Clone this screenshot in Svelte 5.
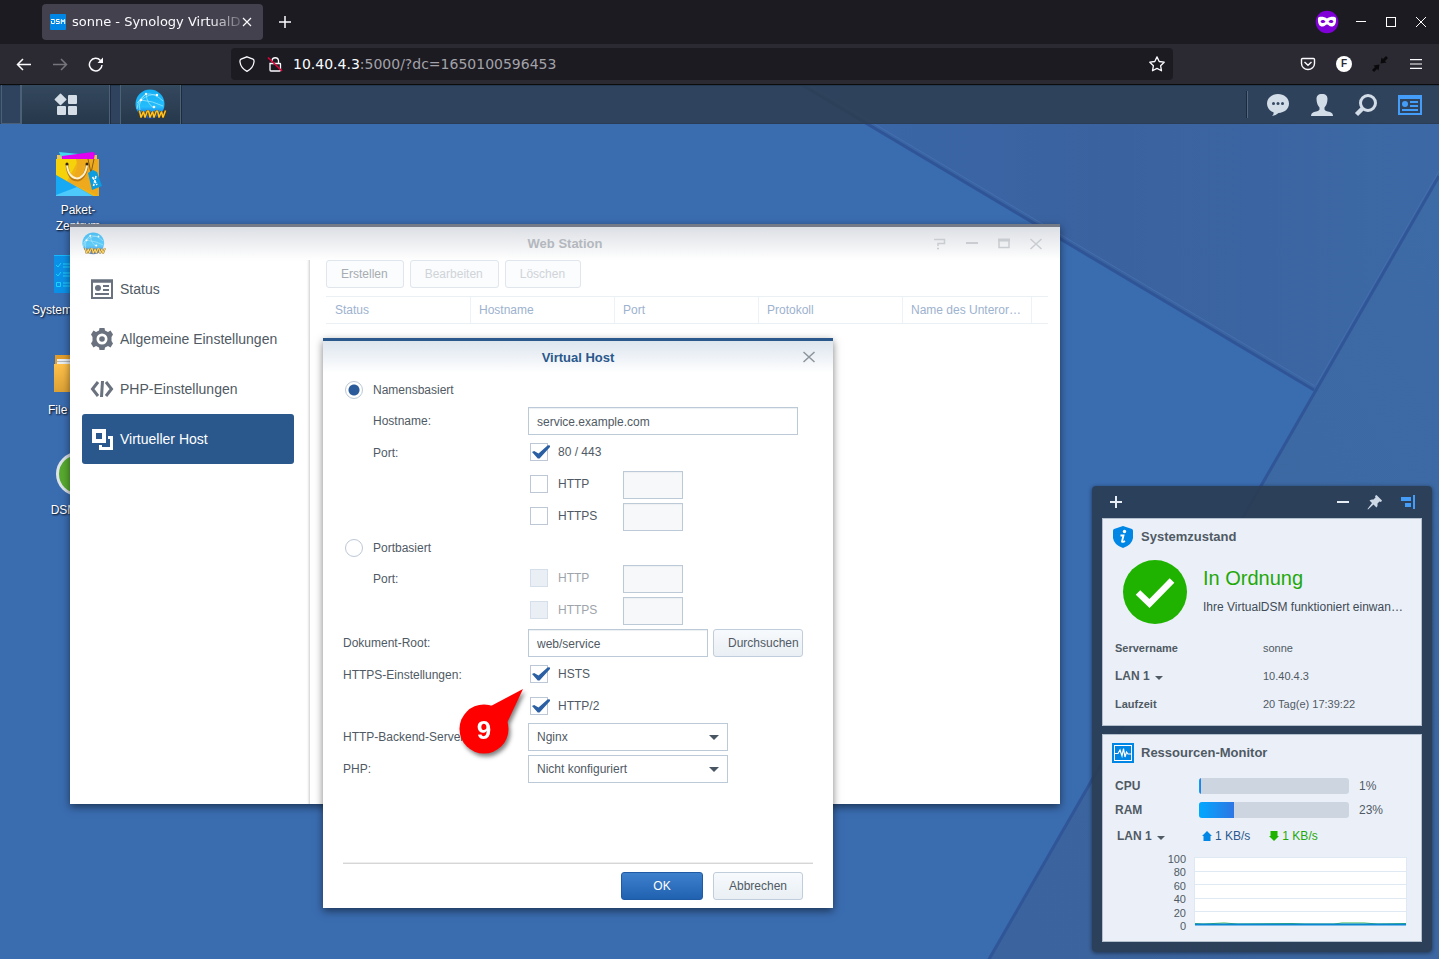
<!-- App.svelte – browser window with the DSM desktop and the Web Station virtual host dialog -->
<script lang="ts">
  const shortcuts = [
    { id: 'packages', name: 'Paket-Zentrum' },
    { id: 'control', name: 'Systemsteuerung' },
    { id: 'files', name: 'File Station' },
    { id: 'help', name: 'DSM-Hilfe' },
  ];

  const sections = [
    { id: 'status', name: 'Status' },
    { id: 'general', name: 'Allgemeine Einstellungen' },
    { id: 'php', name: 'PHP-Einstellungen' },
    { id: 'vhost', name: 'Virtueller Host' },
  ];
  let section = 'vhost';

  const columns = ['Status', 'Hostname', 'Port', 'Protokoll', 'Name des Unterordners'];

  let mode = 'name';
  let hostname = 'service.example.com';
  let defaultPorts = true;
  let customHttp = false;
  let customHttps = false;
  let root = 'web/service';
  let hsts = true;
  let http2 = true;
  let backend = 'Nginx';
  let php = 'Nicht konfiguriert';

  const usage = [
    { name: 'CPU', value: 1 },
    { name: 'RAM', value: 23 },
  ];
  const scale = [100, 80, 60, 40, 20, 0];
</script>

{#snippet globe()}
  <svg class="globe" viewBox="0 0 32 32" aria-hidden="true">
    <defs>
      <linearGradient id="globe-fill" x1="0" y1="0" x2="0" y2="1">
        <stop offset="0" stop-color="#12aef5" />
        <stop offset=".6" stop-color="#25bdfb" />
        <stop offset="1" stop-color="#0b4fd8" />
      </linearGradient>
    </defs>
    <circle cx="15" cy="15" r="14.500" fill="url(#globe-fill)" />
    <g fill="none" stroke="#a5e9ff" stroke-width=".7">
      <path d="M11 5 Q20 4 28 12 M11 5 Q3 10 2 20 M11 5 Q12 15 19 19 M6 11 Q15 4 22 6 M6 11 Q18 12 28 17 M6 11 Q3 17 5 21 M2 14 L11 5" />
    </g>
    <g fill="#fff"><circle cx="11" cy="5" r="1.200" /><circle cx="6" cy="11" r="1.300" /><circle cx="22" cy="6" r="1.200" /><circle cx="19" cy="18" r="1.300" /></g>
    <g fill="none" stroke-linejoin="bevel">
      <path d="M4.500 21.500 L6 28.500 L8.500 22.500 L10 28.500 L12.500 21.500 M13.500 21.500 L15 28.500 L17.500 22.500 L19 28.500 L21.500 21.500 M22.500 21.500 L24 28.500 L26.500 22.500 L28 28.500 L30.500 21.500" stroke="#5b3b05" stroke-width="2.600" />
      <path d="M4.500 21.500 L6 28.500 L8.500 22.500 L10 28.500 L12.500 21.500 M13.500 21.500 L15 28.500 L17.500 22.500 L19 28.500 L21.500 21.500 M22.500 21.500 L24 28.500 L26.500 22.500 L28 28.500 L30.500 21.500" stroke="#ffc526" stroke-width="1.500" />
    </g>
  </svg>
{/snippet}

{#snippet cross()}
  <svg width="12" height="12" viewBox="0 0 12 12" fill="none" stroke="currentColor" stroke-width="1.500" aria-hidden="true"><path d="M.5 1 L11.500 11 M11.500 1 L.5 11" /></svg>
{/snippet}

<div class="browser">
  <header class="tabs">
    <div class="tab">
      <span class="favicon">
        <svg width="16" height="16" viewBox="0 0 16 16" fill="none" stroke="#fff" stroke-width="1" aria-hidden="true">
          <path d="M1 5.500 H4 Q4.700 5.500 4.700 6.200 V8.800 Q4.700 9.500 4 9.500 H1.500 V7 M9.500 5.500 H6.500 V7.500 H9.300 V9.500 H6 M11.300 10 V5.500 H11.700 L13 8 L14.300 5.500 H14.700 V10" />
        </svg>
      </span>
      <span class="tab-title">sonne - Synology VirtualDSM</span>
      <button class="plain" aria-label="Close tab">
        <svg width="10" height="10" viewBox="0 0 10 10" stroke="#fbfbfe" stroke-width="1.200" aria-hidden="true"><path d="M1 1 L9 9 M9 1 L1 9" /></svg>
      </button>
    </div>
    <button class="plain new-tab" aria-label="New tab">
      <svg width="12" height="12" viewBox="0 0 12 12" stroke="#fbfbfe" stroke-width="1.500" aria-hidden="true"><path d="M6 0 V12 M0 6 H12" /></svg>
    </button>
    <div class="window-controls">
      <svg class="mask" width="24" height="24" viewBox="0 0 24 24" aria-hidden="true">
        <circle cx="12" cy="12" r="11.300" fill="#8000d7" />
        <path d="M12 8.500 C14 6.800 20 6 21 8 C21.500 14 19.500 16.500 16.500 16.500 C14 16.500 13.500 14.500 12 14.500 C10.500 14.500 10 16.500 7.500 16.500 C4.500 16.500 2.500 14 3 8 C4 6 10 6.800 12 8.500 Z" fill="#fff" />
        <path d="M5.500 11.500 C7 9.300 9.500 9.700 10.500 11.800 C9 13.500 6.500 13.500 5.500 11.500 Z M18.500 11.500 C17 9.300 14.500 9.700 13.500 11.800 C15 13.500 17.500 13.500 18.500 11.500 Z" fill="#8000d7" />
      </svg>
      <button class="plain" aria-label="Minimize"><svg width="10" height="10" viewBox="0 0 10 10" stroke="#fff" aria-hidden="true"><path d="M0 4.500 H10" /></svg></button>
      <button class="plain" aria-label="Maximize"><svg width="10" height="10" viewBox="0 0 10 10" fill="none" stroke="#fff" aria-hidden="true"><rect x=".5" y=".5" width="9" height="9" /></svg></button>
      <button class="plain" aria-label="Close"><svg width="10" height="10" viewBox="0 0 10 10" stroke="#fff" aria-hidden="true"><path d="M0 0 L10 10 M10 0 L0 10" /></svg></button>
    </div>
  </header>

  <nav class="toolbar">
    <div class="history">
      <button class="plain" aria-label="Back"><svg width="16" height="16" viewBox="0 0 16 16" fill="none" stroke="#fbfbfe" stroke-width="1.500" aria-hidden="true"><path d="M15 8.500 H1.500 M7 3 L1.500 8.500 L7 14" /></svg></button>
      <button class="plain" aria-label="Forward"><svg width="16" height="16" viewBox="0 0 16 16" fill="none" stroke="#76757c" stroke-width="1.500" aria-hidden="true"><path d="M1 8.500 H14.500 M9 3 L14.500 8.500 L9 14" /></svg></button>
      <button class="plain" aria-label="Reload"><svg width="16" height="16" viewBox="0 0 16 16" aria-hidden="true"><path d="M14 9 A6.300 6.300 0 1 1 12.500 4.500" fill="none" stroke="#fbfbfe" stroke-width="1.500" /><path d="M15 1.500 V7 H9.500 Z" fill="#fbfbfe" /></svg></button>
    </div>
    <div class="address">
      <svg width="16" height="16" viewBox="0 0 16 16" fill="none" stroke="#fbfbfe" stroke-width="1.300" aria-hidden="true"><path d="M8 .8 L14 3.200 Q15.300 3.800 15 6 Q14.300 12 8 15.300 Q1.700 12 1 6 Q.7 3.800 2 3.200 Z" /></svg>
      <svg width="16" height="16" viewBox="0 0 16 16" fill="none" stroke="#fbfbfe" stroke-width="1.300" aria-hidden="true"><path d="M5 6 V4.500 A3.300 3.300 0 0 1 11.500 4.500 V7 M3 7.500 H13 Q13.500 7.500 13.500 8 V14 Q13.500 15 12.500 15 H4 Q3 15 3 14 Z" /><path d="M1 1.500 L15 15" stroke="#e3003a" stroke-width="1.600" /></svg>
      <span class="url"><b>10.40.4.3</b>:5000/?dc=1650100596453</span>
      <svg width="16" height="16" viewBox="0 0 16 16" fill="none" stroke="#fbfbfe" stroke-width="1.300" stroke-linejoin="round" aria-hidden="true"><path d="M8 .9 L10.200 5.500 L15.200 6.200 L11.600 9.700 L12.500 14.800 L8 12.400 L3.500 14.800 L4.400 9.700 L.8 6.200 L5.800 5.500 Z" /></svg>
    </div>
    <div class="extensions">
      <svg width="16" height="16" viewBox="0 0 16 16" fill="none" stroke="#fbfbfe" stroke-width="1.400" aria-hidden="true"><path d="M2.500 2.500 H13.500 Q14.500 2.500 14.500 3.500 V7.500 A6.500 6 0 0 1 1.500 7.500 V3.500 Q1.500 2.500 2.500 2.500 Z M4.500 6 L8 9.300 L11.500 6" /></svg>
      <span class="badge-f">F</span>
      <svg width="16" height="16" viewBox="0 0 16 16" fill="#0a0a0c" aria-hidden="true"><path d="M14 0 L16 2 L13 5 L14.500 6.500 L8.500 7.500 L9.500 1.500 L11 3 Z M2 16 L0 14 L3 11 L1.500 9.500 L7.500 8.500 L6.500 14.500 L5 13 Z" /></svg>
      <button class="plain menu" aria-label="Menu"><svg width="12" height="10" viewBox="0 0 12 10" stroke="#fbfbfe" stroke-width="1.200" aria-hidden="true"><path d="M0 .6 H12 M0 5 H12 M0 9.400 H12" /></svg></button>
    </div>
  </nav>

  <main class="desktop">
    <svg class="wallpaper" viewBox="0 0 1439 874" preserveAspectRatio="xMaxYMin slice" aria-hidden="true">
      <defs>
        <linearGradient id="wall-top" x1="0" y1="0" x2="1" y2="0">
          <stop offset="0" stop-color="#3a67a9" />
          <stop offset=".5" stop-color="#3a629f" />
          <stop offset="1" stop-color="#3c69a5" />
        </linearGradient>
        <linearGradient id="wall-side" x1="0" y1="1" x2="1" y2="0">
          <stop offset="0" stop-color="#3b639d" />
          <stop offset="1" stop-color="#3d6ba6" />
        </linearGradient>
      </defs>
      <rect width="1439" height="874" fill="#3a6cb0" />
      <path d="M792 -6 H1439 V89 L1315 304 Z" fill="url(#wall-top)" />
      <path d="M1439 89 L988 874 H1439 Z" fill="url(#wall-side)" />
      <path d="M797 -3 L1314 305" stroke="#2f5597" stroke-width="3" />
      <path d="M799 -6 L1315 301" stroke="#456faf" />
      <path d="M1439 91 L988 876" stroke="#305697" stroke-width="3" />
      <path d="M1439 86 L1316 300" stroke="#456faf" />
    </svg>

    <div class="taskbar">
      <span class="show-desktop"></span>
      <button class="task menu-task" aria-label="Hauptmenü">
        <svg width="24" height="24" viewBox="0 0 24 24" fill="#d5dde6" aria-hidden="true">
          <path d="M7 .7 L12.300 6 Q12.800 6.500 12.300 7 L7 12 Q6.500 12.500 6 12 L.8 7 Q.3 6.500 .8 6 L6 .7 Q6.500 .3 7 .7 Z" />
          <rect x="14" y="2" width="9" height="9" rx="1" /><rect x="3" y="13" width="9" height="9" rx="1" /><rect x="14" y="13" width="9" height="9" rx="1" />
        </svg>
      </button>
      <button class="task app-task" aria-label="Web Station">{@render globe()}</button>
      <div class="tray">
        <button class="plain" aria-label="Benachrichtigungen"><svg width="24" height="24" viewBox="0 0 24 24" aria-hidden="true"><path d="M12 1 C18 1 23 5 23 10.500 C23 16 18.500 19.500 12.500 20 Q10 22.500 6 23 Q8 21.500 7.500 19.300 C3.500 18 1 14.500 1 10.500 C1 5 6 1 12 1 Z" fill="#d3dde8" /><circle cx="7.500" cy="10.500" r="1.500" fill="#344862" /><circle cx="12" cy="10.500" r="1.500" fill="#344862" /><circle cx="16.500" cy="10.500" r="1.500" fill="#344862" /></svg></button>
        <button class="plain" aria-label="Optionen"><svg width="24" height="24" viewBox="0 0 24 24" fill="#d3dde8" aria-hidden="true"><path d="M12 1 C16 1 17.500 3 17.500 6 C17.500 10 16 13 14.500 14.500 V16.500 Q15 18 20 19 Q23 20 23 23 H1 Q1 20 4 19 Q9 18 9.500 16.500 V14.500 C8 13 6.500 10 6.500 6 C6.500 3 8 1 12 1 Z" /></svg></button>
        <button class="plain" aria-label="Suche"><svg width="24" height="24" viewBox="0 0 24 24" fill="none" stroke="#d3dde8" aria-hidden="true"><circle cx="14" cy="10" r="7.500" stroke-width="3" /><path d="M8.500 15.500 L2.500 21.500" stroke-width="4.500" /></svg></button>
        <button class="plain" aria-label="Widgets"><svg width="24" height="20" viewBox="0 0 24 20" aria-hidden="true"><path d="M0 0 H24 V20 H0 Z M2 4 V18 H22 V4 Z" fill="#459dfa" fill-rule="evenodd" /><path d="M12 7 H20 M12 11 H20 M4 15 H20" stroke="#459dfa" stroke-width="2" /><circle cx="7" cy="9" r="3" fill="#459dfa" /></svg></button>
      </div>
    </div>

    <div class="shortcuts">
      {#each shortcuts as item (item.id)}
        <a class="shortcut" href="#{item.id}">
          {#if item.id === 'packages'}
            <svg width="48" height="48" viewBox="0 0 48 48" aria-hidden="true">
              <path d="M3 5 H43 V12 H3 Z" fill="#f3c34c" /><path d="M5 2 L25 4 L20 9 H8 Z" fill="#42d9ef" /><path d="M8 6 L39 2 L41 3 L40 9 H8 Z" fill="#e100f0" />
              <path d="M2 9 H45 V46 H2 Z" fill="#f0b514" /><path d="M2 9 H25 L13 31 L2 25 Z" fill="#f5d20a" /><path d="M22 9 H45 V46 L14 32 Q26 22 22 9 Z" fill="#efa91c" />
              <path d="M2 25 L39 46 H2 Z" fill="#18a9f4" /><path d="M2 46 V45 L23 37 L39 46 Z" fill="#4dc9fc" />
              <path d="M13 14 C14 35 31 35 33 15" fill="none" stroke="#b97912" stroke-width="3" /><path d="M13 14 C14 33 31 33 33 15" fill="none" stroke="#fff2ce" stroke-width="2" />
              <circle cx="13" cy="14" r="1.500" fill="#30240d" /><circle cx="33" cy="14" r="1.500" fill="#30240d" /><path d="M34 9 L37 23 L40 9" fill="none" stroke="#825b19" />
              <path d="M34 23 L39 20 L43 22 L48 36 L38 40 Z" fill="#0c9ce0" /><path d="M38.500 27 L43 35 M42 26 L39.500 36" stroke="#fff" stroke-width="1.600" stroke-dasharray="3 1" />
            </svg>
          {:else if item.id === 'control'}
            <svg width="48" height="48" viewBox="0 0 48 48" aria-hidden="true"><rect y="5" width="46" height="38" fill="#0a91e7" /><path d="M0 5.500 H46" stroke="#18b9ff" /><path d="M2 15 L4 17 L7 13 M9 14 H42 M9 17 H42 M2 24 L4 26 L7 22 M9 23 H42 M9 26 H42 M2.500 32.500 H6.500 V36.500 H2.500 Z M9 33 H42 M9 36 H42" fill="none" stroke="#1ed0ff" /></svg>
          {:else if item.id === 'files'}
            <svg width="48" height="48" viewBox="0 0 48 48" aria-hidden="true"><path d="M1 5 H18 L21 8 H45 V41 H1 Z" fill="#e29c29" /><path d="M3 9 H43 V15 H3 Z" fill="#e9edf0" /><path d="M3 11.500 H43" stroke="#aeb8be" /><path d="M0 14 H47 V42 H0 Z" fill="url(#folder-front)" /><defs><linearGradient id="folder-front" x1="0" y1="0" x2="0" y2="1"><stop stop-color="#ffc14a" /><stop offset="1" stop-color="#dba034" /></linearGradient></defs></svg>
          {:else}
            <svg width="48" height="48" viewBox="0 0 48 48" aria-hidden="true"><circle cx="24" cy="24" r="20.500" fill="#57a92f" stroke="#dce3e9" stroke-width="3" /><path d="M18 18 Q19 12 25 13 Q31 15 29 21 L24 26 V30" fill="none" stroke="#fff" stroke-width="4" /><circle cx="24" cy="35" r="2.500" fill="#fff" /></svg>
          {/if}
          <span>{item.name}</span>
        </a>
      {/each}
    </div>

    <section class="window web-station" aria-label="Web Station">
      <header class="title-bar">
        {@render globe()}
        <h2>Web Station</h2>
        <div class="title-tools">
          <button class="plain" aria-label="Hilfe"><svg width="12" height="12" viewBox="0 0 12 12" fill="none" stroke="currentColor" stroke-width="1.500" aria-hidden="true"><path d="M0 1.500 H10.500 V5.500 H4 V8 M3 10.500 H5" /></svg></button>
          <button class="plain" aria-label="Minimieren"><svg width="12" height="12" viewBox="0 0 12 12" stroke="currentColor" stroke-width="2" aria-hidden="true"><path d="M0 5 H12" /></svg></button>
          <button class="plain" aria-label="Maximieren"><svg width="12" height="12" viewBox="0 0 12 12" fill="none" stroke="currentColor" aria-hidden="true"><path d="M1 2 V9.500 H11 V2" stroke-width="1.500" /><path d="M0 2 H12" stroke-width="3" /></svg></button>
          <button class="plain" aria-label="Schließen">{@render cross()}</button>
        </div>
      </header>
      <div class="station-body">
        <nav class="sidebar">
          {#each sections as item (item.id)}
            <button class="section" class:active={section === item.id} on:click={() => (section = item.id)}>
              <svg width="24" height="24" viewBox="0 0 24 24" fill="none" stroke="currentColor" aria-hidden="true">
                {#if item.id === 'status'}
                  <path d="M2 3 V21 H22 V3" stroke-width="2" /><path d="M1 4 H23" stroke-width="3.500" /><path d="M13 9 H19 M13 13 H19 M5 17 H19" stroke-width="2" /><circle cx="8" cy="11" r="3" fill="currentColor" stroke="none" />
                {:else if item.id === 'general'}
                  <path d="M9.500 1 H14.500 L15 3.500 L18 5 L20.500 3.500 L23 7.500 L21.500 10 V14 L23 16.500 L20.500 20.500 L18 19 L15 20.500 L14.500 23 H9.500 L9 20.500 L6 19 L3.500 20.500 L1 16.500 L2.500 14 V10 L1 7.500 L3.500 3.500 L6 5 L9 3.500 Z M12 6.500 A5.500 5.500 0 1 0 12 17.500 A5.500 5.500 0 1 0 12 6.500 Z" fill="currentColor" fill-rule="evenodd" stroke="none" /><circle cx="12" cy="12" r="2.800" fill="currentColor" stroke="none" />
                {:else if item.id === 'php'}
                  <path d="M8 5 L2.500 12 L8 19 M16 5 L21.500 12 L16 19" stroke-width="3" /><path d="M12.500 4 L11.500 20" stroke-width="3" />
                {:else}
                  <rect x="4" y="4" width="10" height="10" stroke-width="4" /><path d="M18 10.500 H21.500 V21.500 H10.500 V18" stroke-width="3" />
                {/if}
              </svg>
              <span>{item.name}</span>
            </button>
          {/each}
        </nav>
        <div class="hosts">
          <div class="actions">
            <button class="btn ghost">Erstellen</button>
            <button class="btn ghost" disabled>Bearbeiten</button>
            <button class="btn ghost" disabled>Löschen</button>
          </div>
          <table class="host-table">
            <thead>
              <tr>
                {#each columns as col}
                  <th scope="col">{col}</th>
                {/each}
                <td></td>
              </tr>
            </thead>
          </table>
        </div>
      </div>
    </section>

    <section class="window dialog" role="dialog" aria-label="Virtual Host">
      <header class="title-bar">
        <h2>Virtual Host</h2>
        <div class="title-tools">
          <button class="plain" aria-label="Dialog schließen">{@render cross()}</button>
        </div>
      </header>
      <form on:submit|preventDefault>
        <div class="row short">
          <label class="choice"><input type="radio" value="name" bind:group={mode} /> Namensbasiert</label>
        </div>
        <div class="row">
          <label class="name indent" for="hostname">Hostname:</label>
          <input id="hostname" class="text" type="text" bind:value={hostname} />
        </div>
        <div class="row">
          <span class="name indent">Port:</span>
          <label class="check"><input type="checkbox" bind:checked={defaultPorts} /> 80 / 443</label>
        </div>
        <div class="row">
          <span class="name"></span>
          <label class="check"><input type="checkbox" bind:checked={customHttp} /> HTTP</label>
          <input class="text port" type="text" aria-label="HTTP-Port" disabled={!customHttp} />
        </div>
        <div class="row">
          <span class="name"></span>
          <label class="check"><input type="checkbox" bind:checked={customHttps} /> HTTPS</label>
          <input class="text port" type="text" aria-label="HTTPS-Port" disabled={!customHttps} />
        </div>
        <div class="row short">
          <label class="choice"><input type="radio" value="port" bind:group={mode} /> Portbasiert</label>
        </div>
        <div class="row">
          <span class="name indent">Port:</span>
          <label class="check off"><input type="checkbox" disabled /> HTTP</label>
          <input class="text port" type="text" aria-label="HTTP-Port (portbasiert)" disabled />
        </div>
        <div class="row">
          <span class="name"></span>
          <label class="check off"><input type="checkbox" disabled /> HTTPS</label>
          <input class="text port" type="text" aria-label="HTTPS-Port (portbasiert)" disabled />
        </div>
        <div class="row">
          <label class="name" for="root">Dokument-Root:</label>
          <input id="root" class="text root" type="text" bind:value={root} />
          <button type="button" class="btn browse">Durchsuchen</button>
        </div>
        <div class="row">
          <span class="name">HTTPS-Einstellungen:</span>
          <label class="check"><input type="checkbox" bind:checked={hsts} /> HSTS</label>
        </div>
        <div class="row short">
          <span class="name"></span>
          <label class="check"><input type="checkbox" bind:checked={http2} /> HTTP/2</label>
        </div>
        <div class="row">
          <label class="name" for="backend">HTTP-Backend-Server:</label>
          <select id="backend" bind:value={backend}>
            <option>Nginx</option>
            <option>Apache 2.4</option>
          </select>
        </div>
        <div class="row">
          <label class="name" for="php">PHP:</label>
          <select id="php" bind:value={php}>
            <option>Nicht konfiguriert</option>
            <option>PHP 7.4</option>
          </select>
        </div>
      </form>
      <footer>
        <button class="btn primary">OK</button>
        <button class="btn cancel">Abbrechen</button>
      </footer>
      <div class="callout">
        <svg width="80" height="80" viewBox="0 0 80 80" fill="#fe0000" aria-hidden="true"><circle cx="29" cy="46" r="24.500" /><path d="M34 24 L68 6 L52 40 Z" /></svg>
        <span>9</span>
      </div>
    </section>

    <aside class="widgets">
      <header>
        <button class="plain add" aria-label="Widget hinzufügen"><svg width="12" height="12" viewBox="0 0 12 12" stroke="#e6edf5" stroke-width="2" aria-hidden="true"><path d="M6 0 V12 M0 6 H12" /></svg></button>
        <button class="plain" aria-label="Widgets minimieren"><svg width="12" height="12" viewBox="0 0 12 12" stroke="#e6edf5" stroke-width="2" aria-hidden="true"><path d="M0 6 H12" /></svg></button>
        <button class="plain" aria-label="Anheften"><svg width="16" height="16" viewBox="0 0 16 16" fill="#cfd9e5" aria-hidden="true"><path d="M9.500 1 L15 6.500 L14 8 L12.500 7.500 L10.500 9.500 Q11 12 9.500 13.500 L6.500 10.500 L1 15.500 L.5 15 L5 9 L2.500 6.500 Q4.500 5 6.500 5.500 L8.500 3.500 L8 2 Z" /></svg></button>
        <button class="plain" aria-label="Andocken"><svg width="14" height="14" viewBox="0 0 14 14" fill="#459dfa" aria-hidden="true"><rect y="2" width="10" height="4" /><rect x="4" y="8" width="6" height="4" /><rect x="12" width="2" height="14" /></svg></button>
      </header>

      <section class="card">
        <h3>
          <svg width="22" height="22" viewBox="0 0 22 22" aria-hidden="true"><path d="M11 0 L20 3 Q21 3.500 21 5 V12 Q20 19 11 22 Q2 19 1 12 V5 Q1 3.500 2 3 Z" fill="#0086e5" /><circle cx="12.500" cy="5.500" r="1.700" fill="#fff" /><path d="M8.500 9.500 H11.500 L10 15.500 Q10.500 16.500 13 15" fill="none" stroke="#fff" stroke-width="1.800" /></svg>
          Systemzustand
        </h3>
        <div class="health">
          <svg width="64" height="64" viewBox="0 0 64 64" aria-hidden="true"><circle cx="32" cy="32" r="32" fill="#1fb300" /><path d="M15 32.500 L26.500 43.500 L49 20.500" fill="none" stroke="#fff" stroke-width="6.500" /></svg>
          <div class="health-text">
            <strong>In Ordnung</strong>
            <p>Ihre VirtualDSM funktioniert einwandfrei.</p>
          </div>
        </div>
        <table class="facts">
          <tbody>
            <tr><th scope="row">Servername</th><td>sonne</td></tr>
            <tr><th scope="row"><button class="plain lan">LAN 1 <i class="caret"></i></button></th><td>10.40.4.3</td></tr>
            <tr><th scope="row">Laufzeit</th><td>20 Tag(e) 17:39:22</td></tr>
          </tbody>
        </table>
      </section>

      <section class="card">
        <h3>
          <svg width="22" height="20" viewBox="0 0 22 20" fill="none" stroke="#fff" aria-hidden="true"><rect width="22" height="20" fill="#0086e5" stroke="none" /><rect x="2.500" y="2.500" width="17" height="15" /><path d="M3 10.500 H6 L8 7 L10 13 L11.500 5.500 L13 14 L14.500 9 L16 11 H19" stroke-width="1.200" /></svg>
          Ressourcen-Monitor
        </h3>
        <div class="usages">
          {#each usage as item (item.name)}
            <div class="usage">
              <b>{item.name}</b>
              <span class="bar"><span class="fill" style="width: {item.value}%"></span></span>
              <span>{item.value}%</span>
            </div>
          {/each}
        </div>
        <div class="traffic">
          <button class="plain lan">LAN 1 <i class="caret"></i></button>
          <span class="up"><svg width="10" height="10" viewBox="0 0 10 10" fill="#0086e5" aria-hidden="true"><path d="M5 0 L10 5 H8.500 V10 H1.500 V5 H0 Z" /></svg>1 KB/s</span>
          <span class="down"><svg width="10" height="10" viewBox="0 0 10 10" fill="#1fb300" aria-hidden="true"><path d="M5 10 L10 5 H8.500 V0 H1.500 V5 H0 Z" /></svg>1 KB/s</span>
        </div>
        <div class="chart">
          <div class="scale">
            {#each scale as tick}<span>{tick}</span>{/each}
          </div>
          <svg viewBox="0 0 213 69" preserveAspectRatio="none" aria-hidden="true">
            <rect x=".5" y=".5" width="212" height="67" fill="#fff" stroke="#dfe9f3" />
            <path d="M0 14.500 H213 M0 27.500 H213 M0 41.500 H213 M0 54.500 H213" stroke="#dfe9f3" />
            <path d="M1 66.500 L9 67 L30 66 L44 67 L98 66.500 L110 67 L140 67 L148 66 L170 66 L184 67 L212 66.500" fill="none" stroke="#39b44a" />
            <path d="M1 67.500 H212" stroke="#0b86d4" stroke-width="2" />
          </svg>
        </div>
      </section>
    </aside>
  </main>
</div>

<style>
  :global(body) { margin: 0; font-family: "Liberation Sans", Arial, sans-serif; }
  .browser { min-height: 100vh; display: flex; flex-direction: column; color: #505a64; font-size: 12px; line-height: 16px; background: #1c1b22; }
  button, input, select { font: inherit; color: inherit; box-sizing: border-box; margin: 0; }
  svg { display: block; flex: none; }
  h2, h3, p { margin: 0; }
  .plain { display: flex; align-items: center; justify-content: center; padding: 0; border: none; background: none; cursor: pointer; }

  /* browser chrome */
  .tabs { height: 44px; display: flex; align-items: center; padding: 0 13px 0 42px; }
  .tab { width: 221px; height: 36px; box-sizing: border-box; display: flex; align-items: center; gap: 6px; padding: 0 11px 0 8px; border-radius: 4px; background: #42414d; color: #fbfbfe; font: 13px/20px "DejaVu Sans", sans-serif; }
  .favicon { background: #0086e5; border-radius: 1px; }
  .tab-title { flex: 1; margin-right: -4px; overflow: hidden; white-space: nowrap; mask-image: linear-gradient(to right, #000 82%, transparent 105%); }
  .new-tab { margin-left: 16px; }
  .window-controls { display: flex; align-items: center; gap: 20px; margin-left: auto; }
  .mask { margin-right: -3px; }
  .toolbar { height: 40px; display: flex; align-items: center; padding: 0 16px; background: #2b2a33; border-bottom: 1px solid #0c0c0d; }
  .history { display: flex; gap: 20px; width: 215px; }
  .address { flex: 1; height: 32px; display: flex; align-items: center; gap: 12px; padding: 0 8px; border-radius: 4px; background: #1c1b22; }
  .url { flex: 1; color: #a3a2a9; font: 14px/20px "DejaVu Sans", sans-serif; margin-left: -2px; }
  .url b { color: #fbfbfe; font-weight: normal; }
  .extensions { display: flex; align-items: center; justify-content: flex-end; gap: 20px; width: 249px; padding-right: 1px; }
  .menu { margin-left: 2px; }
  .badge-f { width: 16px; height: 16px; border-radius: 50%; background: #fff; color: #2b2a33; font-size: 10px; font-weight: bold; text-align: center; }

  /* desktop */
  .desktop { flex: 1; position: relative; overflow: hidden; background: #3a6cb0; }
  .wallpaper { position: absolute; inset: 0; width: 100%; height: 100%; }
  .taskbar { position: relative; height: 39px; display: flex; background: rgba(45, 62, 82, 0.88); box-shadow: inset 0 1px #24384f, inset 0 -1px #2a3d54; }
  .show-desktop { width: 18px; margin-left: 1px; border: 1px solid #4a6078; border-top: none; }
  .task { display: flex; align-items: center; justify-content: center; padding: 0; border: solid #4d6174; border-width: 0 1px; background: linear-gradient(#34485e, #26384b); box-shadow: 1px 0 #1d2d3f; cursor: pointer; }
  .menu-task { width: 89px; }
  .app-task { width: 61px; margin-left: 10px; }
  .globe { width: 32px; height: 32px; }
  .tray { display: flex; align-items: center; gap: 20px; margin: 6px 17px 6px auto; padding-left: 19px; border-left: 1px solid #1c2b3b; box-shadow: inset 1px 0 #526880; }
  .shortcuts { position: relative; width: 94px; padding: 26px 0 0 31px; }
  .shortcut { display: flex; flex-direction: column; align-items: center; gap: 4px; height: 100px; color: #fff; text-align: center; text-decoration: none; text-shadow: 1px 1px 2px #000; }
  .shortcut span { width: 92px; }
  .shortcut:first-child span { width: 60px; }

  /* windows */
  .window { position: absolute; display: flex; flex-direction: column; background: #fff; box-shadow: 0 3px 8px rgba(0, 0, 0, 0.5); }
  .web-station { left: 70px; top: 139px; width: 990px; height: 580px; box-sizing: border-box; border-top: 3px solid #747b86; }
  .title-bar { position: relative; height: 32px; flex: none; display: flex; align-items: center; justify-content: center; background: linear-gradient(#dde5ee, #fff); }
  .title-bar h2 { font-size: 13px; line-height: 15px; color: #2a588c; }
  .title-tools { position: absolute; right: 18px; display: flex; gap: 20px; color: #8c949c; }
  .web-station .title-bar { height: 33px; background: linear-gradient(#dcdfe4, #fff); }
  .web-station h2 { color: #b4b8be; }
  .web-station .title-tools { color: #c9ccd0; }
  .web-station .globe { position: absolute; left: 12px; width: 24px; height: 24px; opacity: 0.7; }
  .station-body { flex: 1; display: flex; }
  .sidebar { width: 212px; padding: 4px 15px 0 12px; border-right: 1px solid #dcdcdc; box-shadow: inset -2px 0 2px -1px #e6e6e6; }
  .section { width: 100%; height: 50px; display: flex; align-items: center; gap: 6px; padding: 0 8px; border: none; border-radius: 3px; background: none; color: #69727e; font-size: 14px; text-align: left; white-space: nowrap; cursor: pointer; }
  .section span { color: #505a64; }
  .section.active, .section.active span { color: #fff; }
  .section.active { background: #2a588c; }
  .hosts { flex: 1; padding: 0 12px 0 16px; }
  .actions { display: flex; gap: 6px; margin-bottom: 8px; }
  .btn { height: 28px; padding: 0 14px; border: 1px solid #c0cddb; border-radius: 3px; background: linear-gradient(#f7fafd, #e9eff4); white-space: nowrap; cursor: pointer; }
  .btn.ghost { padding: 0 15px 0 14px; border-color: #e0e6ec; background: #fafcfe; color: #a7acb1; }
  .btn.ghost:disabled { color: #d0d4d8; }
  .btn.primary { width: 82px; border-color: #1f5aa5; background: linear-gradient(#3f80cd, #2062b0); color: #fff; }
  .host-table { width: 100%; table-layout: fixed; border-collapse: separate; border-spacing: 0; border: solid #ebf0f5; border-width: 1px 0; }
  .host-table th { width: 144px; height: 26px; box-sizing: border-box; padding: 0 8px; border-right: 1px solid #ebf2f8; color: #9db2ce; font-weight: normal; text-align: left; overflow: hidden; text-overflow: ellipsis; white-space: nowrap; }
  .host-table th:first-child { width: 145px; padding-left: 9px; }
  .host-table th:last-of-type { width: 129px; padding-right: 7px; }
  .host-table td { padding: 0; }

  .dialog { left: 323px; top: 253px; width: 510px; height: 570px; box-sizing: border-box; border-top: 3px solid #2a588c; }
  form { flex: 1; display: flex; flex-direction: column; gap: 4px; padding: 4px 30px 0 20px; }
  .row { display: flex; align-items: center; height: 28px; }
  .row.short { height: 26px; }
  .name { width: 185px; box-sizing: border-box; flex: none; white-space: nowrap; }
  .indent { padding-left: 30px; }
  .choice { display: flex; align-items: center; gap: 9px; padding-left: 2px; }
  .check { width: 95px; display: flex; align-items: center; gap: 10px; padding: 0 0 2px 2px; box-sizing: border-box; }
  .short .check { padding-bottom: 0; }
  .check.off { color: #9da4ab; }
  input[type='radio'], input[type='checkbox'] { appearance: none; flex: none; width: 18px; height: 18px; position: relative; border: 1px solid #bcc8d6; background: #fff; }
  input[type='radio'] { border-radius: 50%; margin-right: 1px; }
  input[type='radio']:checked { background: radial-gradient(circle, #2a5a9a 5px, #fff 6px); }
  input[type='checkbox']:checked::after { content: ''; position: absolute; left: 1px; top: 1px; width: 18px; height: 14px; background: #2b5fa3; clip-path: polygon(0 50%, 12% 42%, 36% 60%, 88% 2%, 100% 4%, 100% 14%, 42% 96%, 32% 96%); }
  input[type='checkbox']:disabled { background: #e9eff4; border-color: #d5dfe9; }
  .text { width: 270px; height: 28px; padding: 2px 8px 0; border: 1px solid #bccad8; box-shadow: inset 0 1px 1px #edf0f3; background: #fff; }
  .text:disabled { background: #f6f8fa; }
  .text.port { width: 60px; }
  .text.root { width: 180px; }
  .browse { width: 90px; margin-left: 5px; }
  select { appearance: none; width: 200px; height: 28px; padding: 0 30px 0 8px; border: 1px solid #bccad8; border-radius: 0; background: url("data:image/svg+xml,%3Csvg xmlns='http://www.w3.org/2000/svg' width='10' height='5'%3E%3Cpath d='M0 0h10L5 5z' fill='%23485562'/%3E%3C/svg%3E") right 8px center no-repeat, #fff; }
  .dialog footer { display: flex; justify-content: flex-end; gap: 10px; margin: 0 20px; padding: 8px 10px; border-top: 1px solid #d6d6d6; box-shadow: 0 -1px #eee; }
  .cancel { width: 90px; }
  .callout { position: absolute; left: 132px; top: 342px; filter: drop-shadow(2px 3px 2px rgba(0, 0, 0, 0.5)); }
  .callout span { position: absolute; left: 5px; top: 32px; width: 48px; color: #fff; font-size: 26px; line-height: 30px; font-weight: bold; text-align: center; }

  /* widgets */
  .widgets { position: absolute; right: 7px; bottom: 7px; width: 340px; box-sizing: border-box; display: flex; flex-direction: column; gap: 8px; padding: 0 10px 10px; border-radius: 4px; background: rgba(42, 60, 82, 0.9); box-shadow: 0 1px 4px rgba(0, 0, 0, 0.5); }
  .widgets header { display: flex; align-items: center; gap: 18px; height: 32px; padding: 0 7px 0 8px; margin-bottom: -8px; }
  .add { margin-right: auto; }
  .card { height: 208px; box-sizing: border-box; border: 1px solid #b3bfcc; background: #ebf0f8; }
  .card h3 { display: flex; align-items: center; gap: 7px; height: 35px; padding-left: 9px; font-size: 13px; line-height: 15px; }
  .health { display: flex; gap: 16px; padding: 6px 14px 10px 20px; }
  .health-text { flex: 1; min-width: 0; padding-top: 6px; }
  .health strong { display: block; color: #1fa80a; font-size: 20px; line-height: 24px; font-weight: normal; }
  .health p { margin-top: 9px; overflow: hidden; text-overflow: ellipsis; white-space: nowrap; color: #414b55; }
  .facts { width: 100%; padding-left: 12px; border-spacing: 0; font-size: 11px; text-align: left; }
  .facts th, .facts td { height: 28px; padding: 0; }
  .facts th { width: 148px; }
  .lan { font-size: 12px; font-weight: bold; justify-content: flex-start; gap: 5px; }
  .caret { border: 4px solid transparent; border-top: 4px solid #505a64; border-bottom: none; margin-top: 4px; }
  .usages { padding-top: 4px; }
  .usage { display: flex; align-items: center; height: 24px; padding-left: 12px; }
  .usage b { width: 84px; }
  .bar { width: 150px; height: 16px; margin-right: 10px; border-radius: 3px; background: #cdd6e0; overflow: hidden; }
  .fill { display: block; height: 100%; min-width: 2px; background: linear-gradient(to right, #00a8ff, #2f76e4); }
  .traffic { display: flex; align-items: center; height: 28px; padding-left: 14px; }
  .traffic .lan { width: 48px; margin-right: 37px; }
  .traffic span { display: flex; align-items: center; gap: 3px; }
  .up { color: #2a588c; margin-right: 19px; }
  .down { color: #1fa80a; }
  .chart { display: flex; gap: 8px; padding: 7px 14px 0 59px; }
  .chart svg { flex: 1; min-width: 0; height: 69px; }
  .scale { width: 24px; display: flex; flex-direction: column; justify-content: space-between; height: 79px; margin-top: -4px; font-size: 11px; line-height: 12px; text-align: right; }
</style>
